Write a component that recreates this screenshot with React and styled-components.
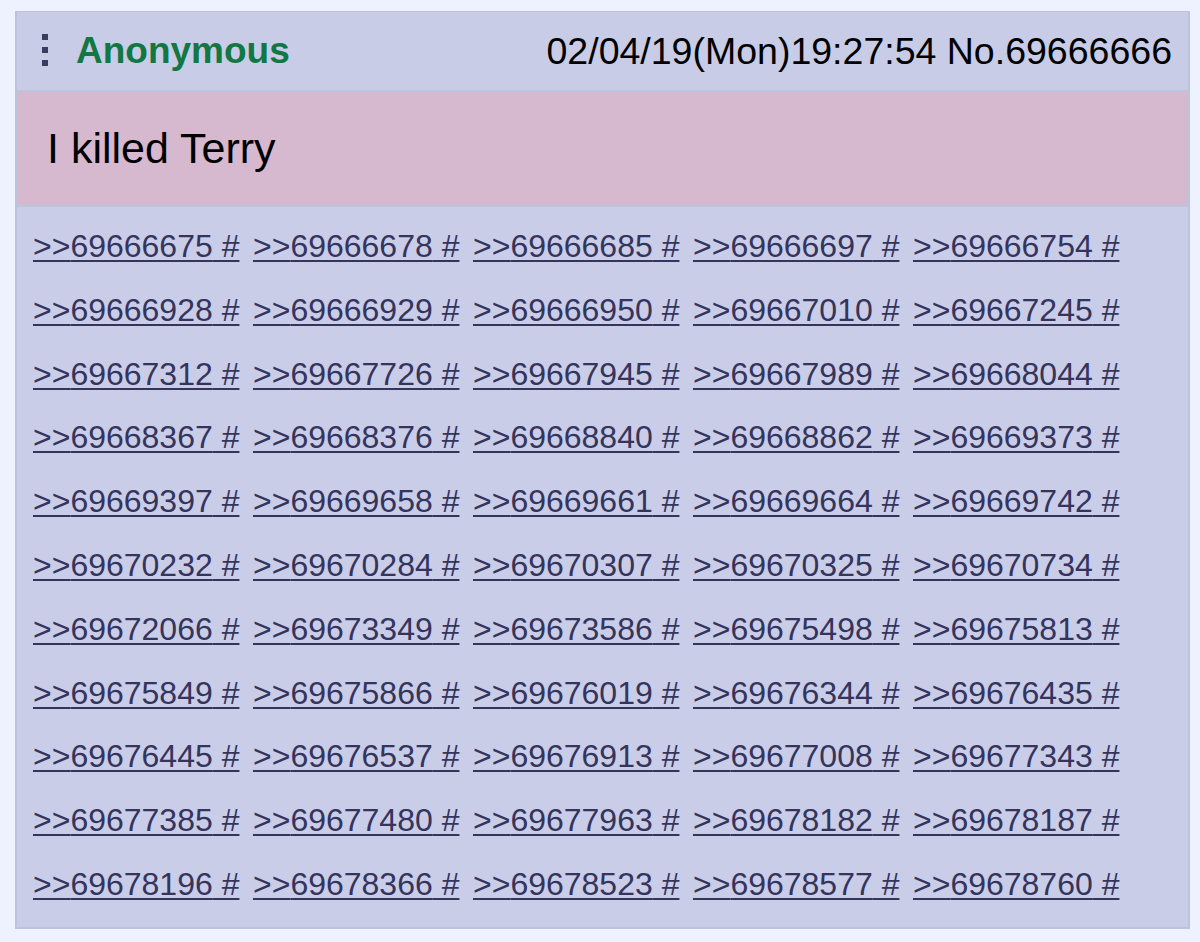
import React from 'react'
import styled, { createGlobalStyle } from 'styled-components'

const GlobalStyle = createGlobalStyle`
  html, body {
    margin: 0;
    padding: 0;
    background: #eef2ff;
  }
  body {
    font-family: "Liberation Sans", Arial, Helvetica, sans-serif;
  }
`

const replies = [
  '69666675', '69666678', '69666685', '69666697', '69666754',
  '69666928', '69666929', '69666950', '69667010', '69667245',
  '69667312', '69667726', '69667945', '69667989', '69668044',
  '69668367', '69668376', '69668840', '69668862', '69669373',
  '69669397', '69669658', '69669661', '69669664', '69669742',
  '69670232', '69670284', '69670307', '69670325', '69670734',
  '69672066', '69673349', '69673586', '69675498', '69675813',
  '69675849', '69675866', '69676019', '69676344', '69676435',
  '69676445', '69676537', '69676913', '69677008', '69677343',
  '69677385', '69677480', '69677963', '69678182', '69678187',
  '69678196', '69678366', '69678523', '69678577', '69678760',
]

function MenuDots() {
  return (
    <svg width="8" height="34" viewBox="0 0 8 34">
      <rect x="1" y="1" width="6" height="6" fill="#3a3d5e" />
      <rect x="1" y="14" width="6" height="6" fill="#3a3d5e" />
      <rect x="1" y="27" width="6" height="6" fill="#3a3d5e" />
    </svg>
  )
}

function App() {
  return (
    <Page>
      <GlobalStyle />
      <Post>
        <Header>
          <MenuButton><MenuDots /></MenuButton>
          <Name>Anonymous</Name>
          <DateInfo>02/04/19(Mon)19:27:54 No.69666666</DateInfo>
        </Header>
        <Message>I killed Terry</Message>
        <Backlinks>
          {replies.map((r) => (
            <QuoteLink key={r} href={'#p' + r}>&gt;&gt;{r} #</QuoteLink>
          ))}
        </Backlinks>
      </Post>
    </Page>
  )
}

const Page = styled.div`
  width: 1200px;
  height: 942px;
  box-sizing: border-box;
  padding: 11px 10px 0 15px;
`

const Post = styled.div`
  width: 1175px;
  box-sizing: border-box;
  background: #c9cde8;
  border: 2px solid #bcc4dc;
  border-top-width: 1px;
`

const Header = styled.div`
  display: flex;
  align-items: center;
  height: 78px;
  padding: 0 16px 0 24px;
  border-bottom: 2px solid #bcc3dc;
  background: #c8cce7;
`

const MenuButton = styled.span`
  display: flex;
  align-items: center;
  width: 8px;
  margin-top: -2px;
`

const Name = styled.span`
  margin-left: 27px;
  color: #117743;
  font-size: 37px;
  font-weight: 700;
`

const DateInfo = styled.span`
  margin-left: auto;
  color: #000;
  font-size: 37.5px;
`

const Message = styled.div`
  display: flex;
  align-items: center;
  height: 113px;
  padding-left: 30px;
  background: #d6b8cf;
  border-bottom: 2px solid #bec4dc;
  color: #000;
  font-size: 43px;
`

const Backlinks = styled.div`
  display: grid;
  grid-template-columns: repeat(5, 205px);
  column-gap: 15px;
  padding: 8px 0 10px 16px;
  line-height: 63.8px;
`

const QuoteLink = styled.a`
  color: #34345c;
  font-size: 32px;
  white-space: nowrap;
  text-decoration: underline;
  text-decoration-thickness: 2px;
  text-underline-offset: 3px;
`

export default App
